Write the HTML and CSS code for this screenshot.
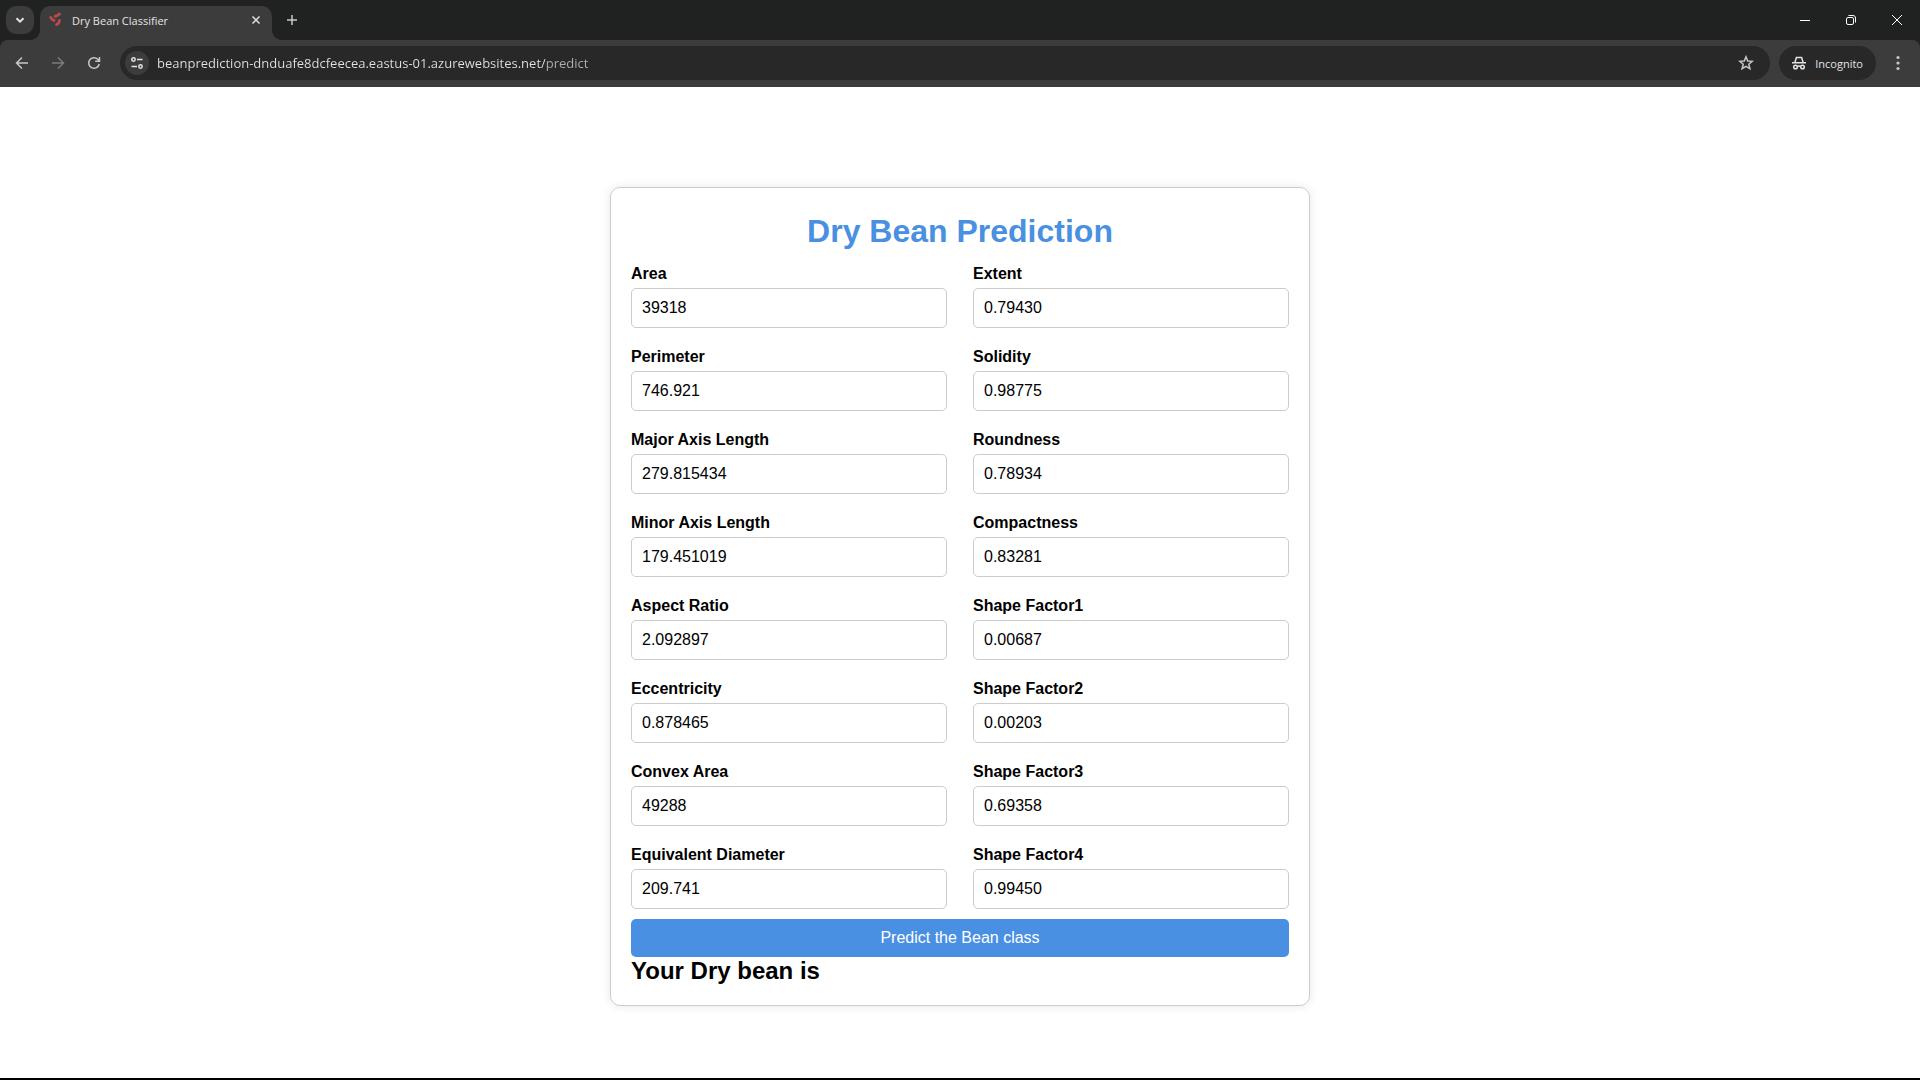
FILE: index.html
```html
<!DOCTYPE html>
<html lang="en">
<head>
<meta charset="utf-8">
<meta name="viewport" content="width=device-width, initial-scale=1">
<title>Dry Bean Classifier</title>
<link rel="stylesheet" href="styles.css">
</head>
<body>
<header class="browser">
  <div class="tabstrip">
    <button class="tab-search" type="button" aria-label="Search tabs">
      <svg width="12" height="12" viewBox="0 0 12 12"><path d="M2.500 4.200 6 7.700 9.500 4.200"/></svg>
    </button>
    <div class="tab">
      <svg class="favicon" width="16" height="16" viewBox="0 0 16 16"><path d="M7.300 4.200Q9.500 3.800 11.300 2"/><path d="M2.800 5.500Q3.600 7.500 6 8.500"/><path d="M11.400 8.500Q11.200 11.500 8.600 12.500"/></svg>
      <span class="tab-title">Dry Bean Classifier</span>
      <button class="tab-close" type="button" aria-label="Close tab">
        <svg width="16" height="16" viewBox="0 0 16 16"><path d="M4.500 4.500 11.500 11.500M11.500 4.500 4.500 11.500"/></svg>
      </button>
    </div>
    <button class="tab-new" type="button" aria-label="New tab">
      <svg width="16" height="16" viewBox="0 0 16 16"><path d="M8 3v10M3 8h10"/></svg>
    </button>
    <div class="window-controls">
      <button type="button" aria-label="Minimize"><svg width="12" height="12" viewBox="0 0 12 12"><path d="M1 6.500h10"/></svg></button>
      <button type="button" aria-label="Restore"><svg width="12" height="12" viewBox="0 0 12 12"><rect x="1.500" y="3.500" width="7" height="7" rx="1.500"/><path d="M3.500 1.500h4.500a2.500 2.500 0 0 1 2.500 2.500v4.500"/></svg></button>
      <button type="button" aria-label="Close"><svg width="12" height="12" viewBox="0 0 12 12"><path d="M1 1 11 11M11 1 1 11"/></svg></button>
    </div>
  </div>
  <div class="toolbar">
    <nav class="history">
      <button type="button" aria-label="Back"><svg width="16" height="16" viewBox="0 0 16 16"><path d="M14 8H3M8 2.500 2.500 8 8 13.500"/></svg></button>
      <button type="button" aria-label="Forward" class="dim"><svg width="16" height="16" viewBox="0 0 16 16"><path d="M2 8h11M8 2.500 13.500 8 8 13.500"/></svg></button>
      <button type="button" aria-label="Reload"><svg width="16" height="16" viewBox="0 0 16 16"><path d="M13.200 9A5.300 5.300 0 1 1 11.800 4.300L13.500 6M13.500 2v4.300H9.200"/></svg></button>
    </nav>
    <div class="omnibox">
      <button class="site-info" type="button" aria-label="View site information">
        <svg width="16" height="16" viewBox="0 0 16 16"><circle cx="4.500" cy="4.500" r="1.700"/><path d="M8 4.500h5.500M2.500 11.500h5.500"/><circle cx="11.500" cy="11.500" r="1.700"/></svg>
      </button>
      <input class="address" type="text" aria-label="Address" value="beanprediction-dnduafe8dcfeecea.eastus-01.azurewebsites.net/predict">
      <button class="bookmark" type="button" aria-label="Bookmark this tab">
        <svg width="16" height="16" viewBox="0 0 16 16"><path d="M8 1.800 9.700 6 14.300 6.300 10.800 9.200 11.900 13.700 8 11.300 4.100 13.700 5.200 9.200 1.700 6.300 6.300 6Z"/></svg>
      </button>
    </div>
    <button class="incognito" type="button">
      <svg width="16" height="16" viewBox="0 0 16 16"><path d="M1 7.700h14M4 7 5.400 2.500H10.600L12 7M6 11.500Q8 10.700 10 11.500"/><circle cx="4.500" cy="12" r="1.800"/><circle cx="11.500" cy="12" r="1.800"/></svg>
      <span>Incognito</span>
    </button>
    <button class="menu" type="button" aria-label="Menu"><svg width="16" height="16" viewBox="0 0 16 16"><circle cx="8" cy="2.500" r="1.600"/><circle cx="8" cy="8" r="1.600"/><circle cx="8" cy="13.500" r="1.600"/></svg></button>
  </div>
</header>
<main class="page">
  <form class="card">
    <h1>Dry Bean Prediction</h1>
    <div class="fields">
      <div class="field"><label for="area">Area</label><input id="area" type="text" value="39318"></div>
      <div class="field"><label for="extent">Extent</label><input id="extent" type="text" value="0.79430"></div>
      <div class="field"><label for="perimeter">Perimeter</label><input id="perimeter" type="text" value="746.921"></div>
      <div class="field"><label for="solidity">Solidity</label><input id="solidity" type="text" value="0.98775"></div>
      <div class="field"><label for="major">Major Axis Length</label><input id="major" type="text" value="279.815434"></div>
      <div class="field"><label for="roundness">Roundness</label><input id="roundness" type="text" value="0.78934"></div>
      <div class="field"><label for="minor">Minor Axis Length</label><input id="minor" type="text" value="179.451019"></div>
      <div class="field"><label for="compactness">Compactness</label><input id="compactness" type="text" value="0.83281"></div>
      <div class="field"><label for="aspect">Aspect Ratio</label><input id="aspect" type="text" value="2.092897"></div>
      <div class="field"><label for="sf1">Shape Factor1</label><input id="sf1" type="text" value="0.00687"></div>
      <div class="field"><label for="eccentricity">Eccentricity</label><input id="eccentricity" type="text" value="0.878465"></div>
      <div class="field"><label for="sf2">Shape Factor2</label><input id="sf2" type="text" value="0.00203"></div>
      <div class="field"><label for="convex">Convex Area</label><input id="convex" type="text" value="49288"></div>
      <div class="field"><label for="sf3">Shape Factor3</label><input id="sf3" type="text" value="0.69358"></div>
      <div class="field"><label for="diameter">Equivalent Diameter</label><input id="diameter" type="text" value="209.741"></div>
      <div class="field"><label for="sf4">Shape Factor4</label><input id="sf4" type="text" value="0.99450"></div>
    </div>
    <button class="submit" type="submit">Predict the Bean class</button>
    <h2>Your Dry bean is</h2>
  </form>
</main>
</body>
</html>
```
FILE: styles.css
```css
* { box-sizing: border-box; }

body {
  margin: 0;
  min-height: 100vh;
  display: flex;
  flex-direction: column;
  background: #fff;
  border-bottom: 2px solid #000;
  color: #000;
  font-family: "Liberation Sans", Arial, sans-serif;
  font-size: 16px;
}

button, input { font: inherit; margin: 0; }
button { padding: 0; border: 0; background: none; color: inherit; }
svg { display: block; flex: none; fill: none; stroke: currentColor; }

/* Browser frame */
.browser {
  background: #202221;
  color: #e3e3e3;
  font-family: "Open Sans", "Noto Sans", sans-serif;
  font-size: 11px;
}
.browser button { display: flex; align-items: center; justify-content: center; }

.tabstrip { display: flex; height: 40px; padding: 6px 0 0 6px; }
.tab-search { width: 28px; height: 28px; border-radius: 10px; background: #3c3c3c; stroke-width: 2; }
.tab {
  position: relative;
  display: flex;
  align-items: center;
  width: 232px;
  margin-left: 6px;
  padding: 0 8px 6px;
  border-radius: 10px 10px 0 0;
  background: #3c3c3c;
}
.tab::before, .tab::after {
  content: "";
  position: absolute;
  bottom: 0;
  width: 10px;
  height: 10px;
}
.tab::before { right: 100%; background: radial-gradient(circle at 0 0, transparent 10px, #3c3c3c 10px); }
.tab::after { left: 100%; background: radial-gradient(circle at 100% 0, transparent 10px, #3c3c3c 10px); }
.favicon { color: #b84a4c; stroke-width: 3; stroke-linecap: round; }
.tab-title { flex: 1; margin-left: 8px; }
.tab-close { stroke-width: 1.500; }
.tab-new { width: 28px; height: 28px; margin-left: 6px; stroke-width: 1.500; color: #c7c7c7; }
.window-controls { display: flex; margin-left: auto; height: 28px; color: #fff; }
.window-controls button { width: 46px; }

.toolbar {
  display: flex;
  align-items: center;
  height: 47px;
  padding: 0 10px 1px 10px;
  border-radius: 8px 8px 0 0;
  background: #3c3c3c;
}
.history { display: flex; gap: 12px; margin-right: 14px; stroke-width: 1.500; color: #c7c7c7; }
.history button { width: 24px; height: 24px; }
.history .dim { color: #7b7b7b; }
.omnibox {
  display: flex;
  align-items: center;
  flex: 1;
  height: 34px;
  padding: 0 16px 0 5px;
  border-radius: 17px;
  background: #282828;
}
.site-info { width: 24px; height: 24px; border-radius: 12px; background: #3c3c3c; stroke-width: 1.500; }
.address {
  flex: 1;
  min-width: 0;
  height: 24px;
  margin-left: 8px;
  padding: 0;
  border: 0;
  outline: 0;
  font-size: 13px;
  color: transparent;
  background: linear-gradient(90deg, #e3e3e3 388px, #b0b0b0 388px);
  background-clip: text;
}
.bookmark { stroke-width: 1.500; color: #c7c7c7; }
.incognito { height: 34px; gap: 8px; margin-left: 9px; padding: 0 13px 0 12px; border-radius: 17px; background: #282828; stroke-width: 1.500; }
.menu { width: 24px; height: 24px; margin-left: 10px; color: #c7c7c7; }
.menu svg { fill: currentColor; stroke: none; }

/* Prediction form */
.page { flex: 1; padding: 100px 20px 71px; }
.card {
  max-width: 700px;
  margin: 0 auto;
  padding: 20px;
  border: 1px solid #ccc;
  border-radius: 10px;
  box-shadow: 0 0 10px rgba(0, 0, 0, 0.1);
}
h1 { margin: 0 0 11px; color: #4a90e2; font-size: 32px; line-height: 46px; text-align: center; }
.fields { display: grid; grid-template-columns: 1fr 1fr; gap: 20px 26px; }
.field { display: flex; flex-direction: column; gap: 5px; }
.field label { font-weight: bold; line-height: 18px; }
.field input {
  width: 100%;
  height: 40px;
  padding: 0 10px;
  border: 1px solid #ccc;
  border-radius: 5px;
  background: #fff;
  color: #000;
}
.submit { width: 100%; height: 38px; margin-top: 10px; border-radius: 5px; background: #4a90e2; color: #fff; }
h2 { margin: 0; font-size: 24px; line-height: 28px; }
```
